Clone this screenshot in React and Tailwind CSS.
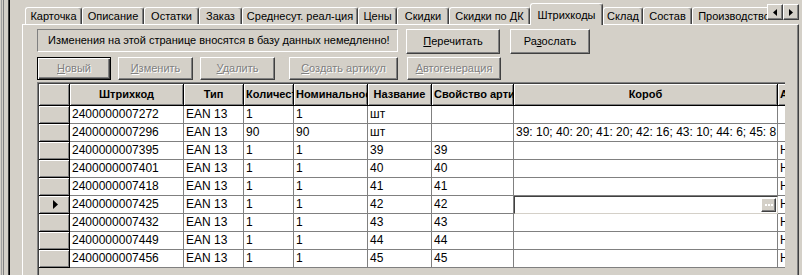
import React from 'react';

const tabs = [
  { label: 'Карточка', w: 'w-[57px]' },
  { label: 'Описание', w: 'w-[62px]' },
  { label: 'Остатки', w: 'w-[55px]' },
  { label: 'Заказ', w: 'w-[43px]' },
  { label: 'Среднесут. реал-ция', w: 'w-[116px]' },
  { label: 'Цены', w: 'w-[39px]' },
  { label: 'Скидки', w: 'w-[52px]' },
  { label: 'Скидки по ДК', w: 'w-[81px]' },
  { label: 'Штрихкоды', w: 'w-[73px]', active: true },
  { label: 'Склад', w: 'w-[40px]' },
  { label: 'Состав', w: 'w-[49px]' },
  { label: 'Производство', w: 'w-[84px]' },
];

const columns = [
  { key: 'code', title: 'Штрихкод', w: 'w-[114px]', head: 'justify-center' },
  { key: 'type', title: 'Тип', w: 'w-[60px]', head: 'justify-center' },
  { key: 'qty', title: 'Количество', w: 'w-[50px]', head: 'justify-start' },
  { key: 'nom', title: 'Номинальное', w: 'w-[74px]', head: 'justify-start' },
  { key: 'name', title: 'Название', w: 'w-[64px]', head: 'justify-center' },
  { key: 'prop', title: 'Свойство артикула', w: 'w-[82px]', head: 'justify-start' },
  { key: 'box', title: 'Короб', w: 'w-[264px]', head: 'justify-center' },
  { key: 'act', title: 'Активен', w: 'w-[60px]', head: 'justify-start' },
];

const rows = [
  { code: '2400000007272', type: 'EAN 13', qty: '1', nom: '1', name: 'шт', prop: '', box: '', act: '' },
  { code: '2400000007296', type: 'EAN 13', qty: '90', nom: '90', name: 'шт', prop: '', box: '39: 10; 40: 20; 41: 20; 42: 16; 43: 10; 44: 6; 45: 8', act: '' },
  { code: '2400000007395', type: 'EAN 13', qty: '1', nom: '1', name: '39', prop: '39', box: '', act: 'Нет' },
  { code: '2400000007401', type: 'EAN 13', qty: '1', nom: '1', name: '40', prop: '40', box: '', act: 'Нет' },
  { code: '2400000007418', type: 'EAN 13', qty: '1', nom: '1', name: '41', prop: '41', box: '', act: 'Нет' },
  { code: '2400000007425', type: 'EAN 13', qty: '1', nom: '1', name: '42', prop: '42', box: '', act: 'Нет', current: true },
  { code: '2400000007432', type: 'EAN 13', qty: '1', nom: '1', name: '43', prop: '43', box: '', act: 'Нет' },
  { code: '2400000007449', type: 'EAN 13', qty: '1', nom: '1', name: '44', prop: '44', box: '', act: 'Нет' },
  { code: '2400000007456', type: 'EAN 13', qty: '1', nom: '1', name: '45', prop: '45', box: '', act: 'Нет' },
];

const raised = 'border border-t-white border-l-white border-r-[#404040] border-b-[#404040] shadow-[inset_-1px_-1px_0_#808080]';
const fixedCell = 'border-r border-b border-black shadow-[inset_1px_1px_0_#fff,inset_-1px_-1px_0_#808080]';
const disabledText = 'text-[#808080] [text-shadow:1px_1px_0_#fff]';

const Btn = ({ w, h = 'h-[23px]', def, disabled, className = '', children }) => (
  <button
    className={`${w} ${h} ${className} shrink-0 flex items-center justify-center bg-[#d4d0c8] ${
      def
        ? 'border border-black shadow-[inset_1px_1px_0_#fff,inset_-1px_-1px_0_#404040,inset_-2px_-2px_0_#808080]'
        : raised
    } ${disabled ? disabledText : 'text-black'}`}
  >
    {children}
  </button>
);

const Arrow = ({ dir }) => (
  <div className={`w-[16px] h-[16px] ${raised} flex items-center justify-center`}>
    <svg width="4" height="7" viewBox="0 0 4 7">
      {dir === 'left' ? <polygon points="4,0 0,3.5 4,7" fill="#000" /> : <polygon points="0,0 4,3.5 0,7" fill="#000" />}
    </svg>
  </div>
);

export default function App() {
  return (
    <div className="w-[802px] h-[275px] overflow-hidden bg-[#d4d0c8] flex font-['Liberation_Sans',Arial,sans-serif] text-[11px] text-black select-none">
      {/* outer frame lines */}
      <div className="flex h-full w-[22px] shrink-0">
        <span className="w-px" />
        <span className="w-px bg-[#a0a0a0]" />
        <span className="w-px" />
        <span className="w-px bg-[#808080]" />
        <span className="w-[4px]" />
        <span className="w-px bg-[#404040]" />
        <span className="w-px bg-black" />
      </div>

      <div className="w-[777px] shrink-0 flex flex-col h-full">
        {/* Tabs */}
        <div className="relative z-10 -mb-px flex h-[25px] items-end pl-[3px]">
          <div className="flex h-full flex-1 items-end overflow-hidden">
            {tabs.map((t) =>
              t.active ? (
                <div
                  key={t.label}
                  className={`${t.w} h-[22px] shrink-0 flex justify-center pt-[3px] whitespace-nowrap bg-[#d4d0c8] rounded-t-[3px] border-l border-t border-white border-r border-r-[#404040] shadow-[inset_-1px_0_0_#808080]`}
                >
                  {t.label}
                </div>
              ) : (
                <div
                  key={t.label}
                  className={`${t.w} h-[17px] mb-px shrink-0 flex items-center justify-center whitespace-nowrap overflow-hidden rounded-t-[3px] border-l border-t border-white border-r border-r-[#404040] shadow-[inset_-1px_0_0_#808080]`}
                >
                  {t.label}
                </div>
              )
            )}
          </div>
          <div className="flex self-start mt-[4px]">
            <Arrow dir="left" />
            <Arrow dir="right" />
          </div>
        </div>

        {/* Page */}
        <div className="flex-1 min-h-0 flex flex-col border-t border-l border-white border-r border-r-[#404040] shadow-[inset_-1px_0_0_#808080] pl-[14px] pt-[4px]">
          <div className="flex items-start">
            <div className="w-[361px] h-[23px] flex items-center pl-[10px] border border-t-[#808080] border-l-[#808080] border-b-white border-r-white whitespace-nowrap">
              Изменения на этой странице вносятся в базу данных немедленно!
            </div>
            <Btn w="w-[94px]" h="h-[25px]" className="ml-[8px]">
              <span><u>П</u>еречитать</span>
            </Btn>
            <Btn w="w-[80px]" h="h-[25px]" className="ml-[10px]">
              <span>Ра<u>з</u>ослать</span>
            </Btn>
          </div>

          <div className="flex mt-[3px]">
            <Btn w="w-[74px]" def disabled><span><u>Н</u>овый</span></Btn>
            <Btn w="w-[75px]" disabled className="ml-[7px]"><span><u>И</u>зменить</span></Btn>
            <Btn w="w-[75px]" disabled className="ml-[7px]"><span><u>У</u>далить</span></Btn>
            <Btn w="w-[109px]" disabled className="ml-[14px]"><span><u>С</u>оздать артикул</span></Btn>
            <Btn w="w-[94px]" disabled className="ml-[9px]"><span><u>А</u>втогенерация</span></Btn>
          </div>

          {/* Grid */}
          <div className="mt-[2px] w-[748px] flex-1 min-h-0 overflow-hidden border-t border-l border-[#808080]">
            <div className="h-full border-t border-l border-[#404040] overflow-hidden">
              <div className="flex h-[22px] w-max">
                <div className={`w-[31px] shrink-0 ${fixedCell}`} />
                {columns.map((c) => (
                  <div
                    key={c.key}
                    className={`${c.w} shrink-0 flex items-center ${c.head} px-[2px] overflow-hidden whitespace-nowrap font-bold ${fixedCell}`}
                  >
                    {c.title}
                  </div>
                ))}
              </div>
              {rows.map((r) => (
                <div key={r.code} className="flex h-[18px] w-max">
                  <div className={`w-[31px] shrink-0 flex items-center justify-center ${fixedCell}`}>
                    {r.current && (
                      <svg width="5" height="9" viewBox="0 0 5 9" className="ml-[2px]">
                        <polygon points="0,0 5,4.5 0,9" fill="#000" />
                      </svg>
                    )}
                  </div>
                  {columns.map((c) =>
                    r.current && c.key === 'box' ? (
                      <div
                        key={c.key}
                        className={`${c.w} shrink-0 flex items-center justify-end bg-white border-t border-l border-[#404040] border-b border-r border-b-[#d4d0c8] border-r-[#d4d0c8] pr-px`}
                      >
                        <div className={`w-[15px] h-[14px] bg-[#d4d0c8] ${raised} flex items-center justify-center gap-px`}>
                          <span className="w-[2px] h-[2px] bg-white" />
                          <span className="w-[2px] h-[2px] bg-white" />
                          <span className="w-[2px] h-[2px] bg-white" />
                        </div>
                      </div>
                    ) : (
                      <div
                        key={c.key}
                        className={`${c.w} shrink-0 bg-white border-r border-b border-[#808080] px-[2px] leading-[17px] text-[12px] whitespace-nowrap overflow-hidden`}
                      >
                        {r[c.key]}
                      </div>
                    )
                  )}
                </div>
              ))}
            </div>
          </div>
        </div>
      </div>
    </div>
  );
}
